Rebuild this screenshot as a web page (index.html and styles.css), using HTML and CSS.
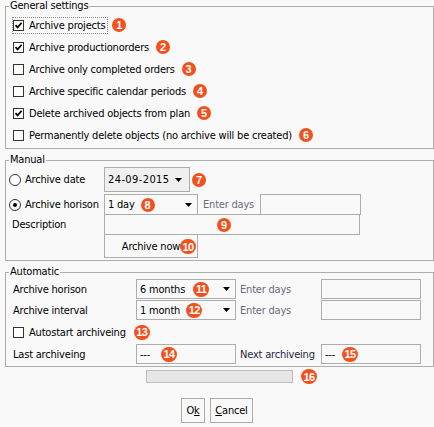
FILE: index.html
```html
<!DOCTYPE html>
<html>
<head>
<meta charset="utf-8">
<link rel="stylesheet" href="styles.css">
</head>
<body>
<div class="dialog">
  <fieldset class="group general">
    <legend>General settings</legend>
    <div class="row"><label class="check focus"><span class="cb"><svg viewBox="0 0 9 9"><path d="M1.5 4.2 L3.6 6.4 L7.6 1.8"/></svg></span>Archive projects</label><span class="badge">1</span></div>
    <div class="row"><label class="check"><span class="cb"><svg viewBox="0 0 9 9"><path d="M1.5 4.2 L3.6 6.4 L7.6 1.8"/></svg></span>Archive productionorders</label><span class="badge">2</span></div>
    <div class="row"><label class="check"><span class="cb"></span>Archive only completed orders</label><span class="badge">3</span></div>
    <div class="row"><label class="check"><span class="cb"></span>Archive specific calendar periods</label><span class="badge b-wide">4</span></div>
    <div class="row"><label class="check"><span class="cb"><svg viewBox="0 0 9 9"><path d="M1.5 4.2 L3.6 6.4 L7.6 1.8"/></svg></span>Delete archived objects from plan</label><span class="badge">5</span></div>
    <div class="row"><label class="check"><span class="cb"></span>Permanently delete objects (no archive will be created)</label><span class="badge">6</span></div>
  </fieldset>

  <fieldset class="group manual">
    <legend>Manual</legend>
    <div class="mrow r-date">
      <label class="radio"><span class="rb"></span>Archive date</label>
      <div class="datebox">24-09-2015<svg class="arrow" viewBox="0 0 7 4"><path d="M0 0 H7 L3.5 4 Z"/></svg></div>
      <span class="badge b-date">7</span>
    </div>
    <div class="mrow r-hor">
      <label class="radio"><span class="rb on"></span>Archive horison</label>
      <div class="combo c-day">1 day<span class="badge b-in">8</span><svg class="arrow" viewBox="0 0 7 4"><path d="M0 0 H7 L3.5 4 Z"/></svg></div>
      <span class="hint">Enter days</span>
      <div class="field f-days"></div>
    </div>
    <div class="mrow r-desc">
      <span class="lbl">Description</span>
      <div class="field f-desc"><span class="badge">9</span></div>
    </div>
    <div class="mrow r-btn">
      <button class="btn btn-archive">Archive now<span class="badge badge2 b-over">10</span></button>
    </div>
  </fieldset>

  <fieldset class="group auto">
    <legend>Automatic</legend>
    <div class="arow">
      <span class="albl">Archive horison</span>
      <div class="combo c-auto">6 months<span class="badge badge2 b-m6">11</span><svg class="arrow" viewBox="0 0 7 4"><path d="M0 0 H7 L3.5 4 Z"/></svg></div>
      <span class="hint h-auto">Enter days</span>
      <div class="field f-auto"></div>
    </div>
    <div class="arow r-int">
      <span class="albl">Archive interval</span>
      <div class="combo c-auto">1 month<span class="badge badge2 b-m1">12</span><svg class="arrow" viewBox="0 0 7 4"><path d="M0 0 H7 L3.5 4 Z"/></svg></div>
      <span class="hint h-auto">Enter days</span>
      <div class="field f-auto"></div>
    </div>
    <div class="arow r-autostart">
      <label class="check"><span class="cb"></span>Autostart archiveing</label><span class="badge badge2 b-auto">13</span>
    </div>
    <div class="arow r-last">
      <span class="albl">Last archiveing</span>
      <div class="field f-val">---<span class="badge badge2 b-last">14</span></div>
      <span class="hint h-next">Next archiveing</span>
      <div class="field f-auto f-val">---<span class="badge badge2 b-next">15</span></div>
    </div>
  </fieldset>

  <div class="progress-row">
    <div class="progress"><span class="badge badge2 b-prog">16</span></div>
  </div>

  <div class="buttons">
    <button class="btn btn-ok">O<u>k</u></button>
    <button class="btn btn-cancel"><u>C</u>ancel</button>
  </div>
</div>
</body>
</html>
```

FILE: styles.css
```css
html, body {
  margin: 0;
  padding: 0;
  background: #f9f9f9;
}
body {
  width: 434px;
  height: 427px;
  overflow: hidden;
  font-family: "DejaVu Sans Condensed", "DejaVu Sans", sans-serif;
  font-size: 11px;
  letter-spacing: -0.2px;
  color: #000;
}
.dialog {
  padding-left: 5px;
}
.group {
  margin: 0;
  border: 1px solid #adadad;
  min-width: 0;
}
.group legend {
  line-height: 12px;
  padding: 0 1px;
}
.general {
  padding: 2px 0 2px 7px;
}
.general legend,
.auto legend {
  margin-left: -4px;
}
.manual {
  margin-top: 5px;
  padding: 1px 0 2px 3px;
}
.auto {
  margin-top: 5px;
  padding: 1px 0 2px 7px;
}

/* badges */
.badge {
  display: inline-flex;
  align-items: center;
  justify-content: center;
  flex: none;
  width: 14px;
  height: 14px;
  border-radius: 50%;
  background: #f2501d;
  color: #fff;
  font-family: "Liberation Sans", Arial, sans-serif;
  font-weight: bold;
  font-size: 11px;
  line-height: 14px;
  letter-spacing: 0;
  margin-left: 6px;
}
.badge2 {
  width: 16px;
  height: 15px;
  border-radius: 8px;
  letter-spacing: -0.6px;
  font-size: 11px;
}

/* checkbox rows */
.row {
  height: 22px;
  display: flex;
  align-items: center;
}
.check {
  display: flex;
  align-items: center;
  height: 15px;
  padding-right: 1px;
}
.focus {
  outline: 1px dotted #8a8a8a;
  outline-offset: 0;
  padding-right: 2px;
  margin-right: -1px;
}
.cb {
  width: 9px;
  height: 9px;
  border: 1px solid #333;
  background: #fff;
  margin-right: 5px;
  display: inline-block;
}
.cb svg {
  display: block;
  width: 9px;
  height: 9px;
  fill: none;
  stroke: #000;
  stroke-width: 1.7;
}

/* manual */
.mrow {
  display: flex;
  align-items: center;
}
.radio {
  width: 95px;
  display: flex;
  align-items: center;
}
.rb {
  width: 10px;
  height: 10px;
  border: 1px solid #333;
  border-radius: 50%;
  background: #fff;
  margin-right: 4px;
  position: relative;
  display: inline-block;
}
.rb.on::after {
  content: "";
  position: absolute;
  left: 3px;
  top: 3px;
  width: 4px;
  height: 4px;
  border-radius: 50%;
  background: #000;
}
.r-date {
  height: 25px;
}
.datebox {
  box-sizing: border-box;
  width: 86px;
  height: 25px;
  border: 1px solid #adadad;
  background: #f0f0f0;
  display: flex;
  align-items: center;
  padding: 0 7px 0 3px;
  letter-spacing: 0.4px;
}
.arrow {
  width: 7px;
  height: 4px;
  margin-left: auto;
  fill: #000;
  flex: none;
}
.b-date {
  margin-left: 2px;
}
.r-hor {
  margin-top: 2px;
  height: 21px;
}
.combo {
  box-sizing: border-box;
  height: 21px;
  border: 1px solid #adadad;
  display: flex;
  align-items: center;
  padding: 0 5px 0 3px;
}
.c-day {
  width: 94px;
}
.hint {
  color: #6b6b7d;
  margin-left: 5px;
  width: 57px;
}
.field {
  box-sizing: border-box;
  height: 21px;
  border: 1px solid #adadad;
  display: flex;
  align-items: center;
}
.f-days {
  width: 101px;
}
.r-desc {
  margin-top: -1px;
  height: 21px;
}
.lbl {
  width: 92px;
  padding-left: 3px;
}
.f-desc {
  width: 256px;
  padding-left: 112px;
}
.f-desc .badge {
  margin-left: 0;
}
.r-btn {
  margin-top: -1px;
  padding-left: 95px;
}
.btn {
  box-sizing: border-box;
  border: 1px solid #adadad;
  background: #f9f9f9;
  font: inherit;
  letter-spacing: inherit;
  color: #000;
  padding: 0;
  margin: 0;
}
.btn-archive {
  width: 94px;
  height: 24px;
  position: relative;
}
.b-over {
  position: absolute;
  right: 1px;
  top: 4px;
  margin: 0;
}

/* automatic */
.arow {
  display: flex;
  align-items: center;
  height: 20px;
}
.r-int {
  margin-top: 1px;
}
.albl {
  width: 123px;
}
.c-auto {
  width: 100px;
  height: 20px;
}
.h-auto, .h-next {
  margin-left: 4px;
  width: 81px;
}
.h-next {
  color: #1f1f45;
}
.f-auto {
  width: 100px;
  height: 20px;
}
.f-val {
  width: 100px;
  height: 20px;
  padding-left: 3px;
}
.b-m6 { margin-left: 8px; }
.b-m1 { margin-left: 6px; }
.r-autostart {
  height: 24px;
}
.b-auto { margin-left: 7px; }
.b-last { margin-left: 11px; }
.b-next { margin-left: 7px; }

/* progress */
.progress-row {
  display: flex;
  justify-content: center;
  margin-top: 3px;
}
.progress {
  box-sizing: border-box;
  width: 147px;
  height: 13px;
  border: 1px solid #bdbdbd;
  background: #e6e6e6;
  position: relative;
}
.b-prog {
  position: absolute;
  left: 154px;
  top: -2px;
  margin: 0;
}

/* buttons */
.buttons {
  display: flex;
  justify-content: center;
  gap: 5px;
  margin-top: 15px;
  margin-left: -5px;
}
.btn-ok {
  width: 24px;
  height: 25px;
}
.btn-cancel {
  width: 43px;
  height: 25px;
}
.btn u {
  text-underline-offset: 1px;
}
```
